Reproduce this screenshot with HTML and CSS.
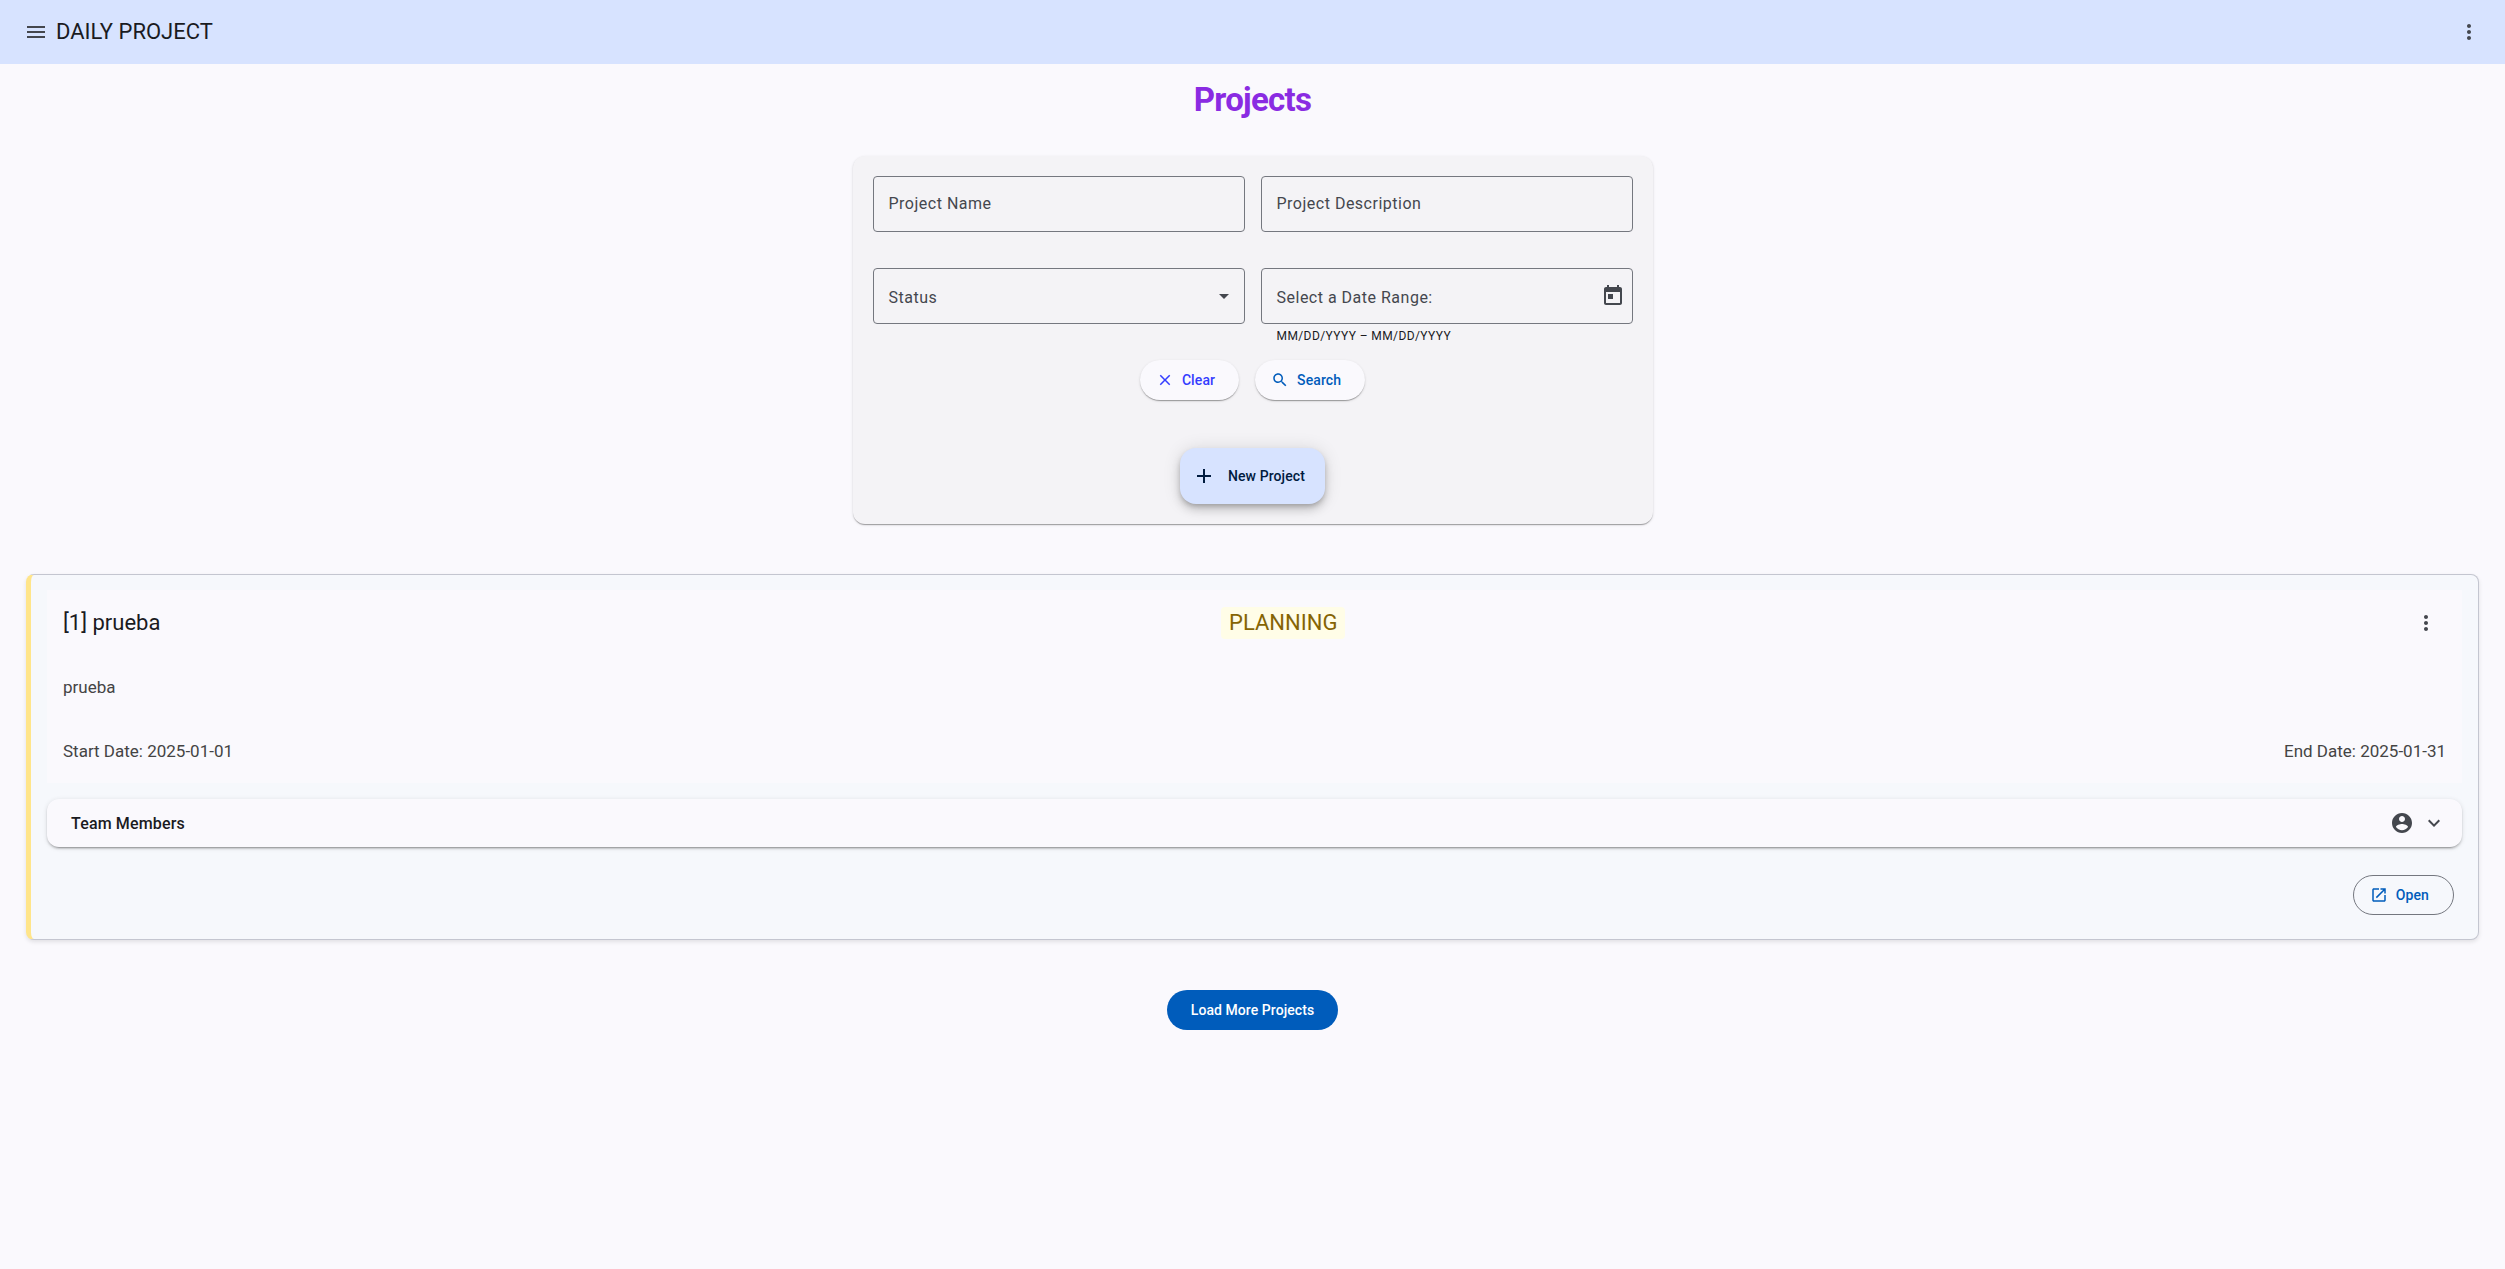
FILE: index.html
```html
<!DOCTYPE html>
<html lang="en">
<head>
<meta charset="utf-8">
<title>Daily Project</title>
<link rel="stylesheet" href="styles.css">
</head>
<body>
<header class="toolbar">
  <svg class="icon" viewBox="0 0 24 24"><path d="M3 18h18v-2H3v2zm0-5h18v-2H3v2zm0-7v2h18V6H3z"/></svg>
  <span class="toolbar-title">DAILY PROJECT</span>
  <svg class="icon" viewBox="0 0 24 24"><path d="M12 8c1.1 0 2-.9 2-2s-.9-2-2-2-2 .9-2 2 .9 2 2 2zm0 2c-1.1 0-2 .9-2 2s.9 2 2 2 2-.9 2-2-.9-2-2-2zm0 6c-1.1 0-2 .9-2 2s.9 2 2 2 2-.9 2-2-.9-2-2-2z"/></svg>
</header>
<main>
  <h1 class="page-title">Projects</h1>
  <form class="filters">
    <div class="fields">
      <div class="field"><span>Project Name</span></div>
      <div class="field"><span>Project Description</span></div>
      <div class="field low"><span>Status</span><svg class="icon arrow" viewBox="0 0 24 24"><path d="M7 10l5 5 5-5z"/></svg></div>
      <div class="field-group">
        <div class="field low date"><span>Select a Date Range:</span><svg class="icon" viewBox="0 0 24 24"><path d="M19 3h-1V1h-2v2H8V1H6v2H5c-1.11 0-1.99.9-1.99 2L3 19c0 1.1.89 2 2 2h14c1.1 0 2-.9 2-2V5c0-1.1-.9-2-2-2zm0 16H5V8h14v11zM7 10h5v5H7z"/></svg></div>
        <div class="hint">MM/DD/YYYY – MM/DD/YYYY</div>
      </div>
    </div>
    <div class="actions">
      <button type="button" class="btn raised clear"><svg class="small-icon" viewBox="0 0 24 24"><path d="M19 6.41L17.59 5 12 10.59 6.41 5 5 6.41 10.59 12 5 17.59 6.41 19 12 13.41 17.59 19 19 17.59 13.41 12z"/></svg>Clear</button>
      <button type="button" class="btn raised"><svg class="small-icon" viewBox="0 0 24 24"><path d="M15.5 14h-.79l-.28-.27C15.41 12.59 16 11.11 16 9.5 16 5.91 13.09 3 9.5 3S3 5.91 3 9.5 5.91 16 9.5 16c1.61 0 3.09-.59 4.23-1.57l.27.28v.79l5 4.99L20.49 19l-4.99-5zm-6 0C7.01 14 5 11.99 5 9.5S7.01 5 9.5 5 14 7.01 14 9.5 11.99 14 9.5 14z"/></svg>Search</button>
    </div>
    <button type="button" class="fab"><svg class="icon" viewBox="0 0 24 24"><path d="M19 13h-6v6h-2v-6H5v-2h6V5h2v6h6v2z"/></svg>New Project</button>
  </form>

  <article class="project">
    <section class="summary">
      <div class="summary-head">
        <span class="name">[1] prueba</span>
        <span class="status">PLANNING</span>
        <span class="menu"><svg class="icon" viewBox="0 0 24 24"><path d="M12 8c1.1 0 2-.9 2-2s-.9-2-2-2-2 .9-2 2 .9 2 2 2zm0 2c-1.1 0-2 .9-2 2s.9 2 2 2 2-.9 2-2-.9-2-2-2zm0 6c-1.1 0-2 .9-2 2s.9 2 2 2 2-.9 2-2-.9-2-2-2z"/></svg></span>
      </div>
      <p class="description">prueba</p>
      <div class="dates"><span>Start Date: 2025-01-01</span><span>End Date: 2025-01-31</span></div>
    </section>
    <section class="panel">
      <span class="panel-title">Team Members</span>
      <svg class="icon" viewBox="0 0 24 24"><path d="M12 2C6.48 2 2 6.48 2 12s4.48 10 10 10 10-4.48 10-10S17.52 2 12 2zm0 3c1.66 0 3 1.34 3 3s-1.34 3-3 3-3-1.34-3-3 1.34-3 3-3zm0 14.2c-2.5 0-4.71-1.28-6-3.22.03-1.99 4-3.08 6-3.08 1.99 0 5.97 1.09 6 3.08-1.29 1.94-3.5 3.22-6 3.22z"/></svg>
      <svg class="icon chevron" viewBox="0 0 24 24"><path d="M7.41 8.59L12 13.17l4.59-4.58L18 10l-6 6-6-6z"/></svg>
    </section>
    <div class="project-actions">
      <button type="button" class="btn outlined"><svg class="small-icon" viewBox="0 0 24 24"><path d="M19 19H5V5h7V3H5c-1.11 0-2 .9-2 2v14c0 1.1.89 2 2 2h14c1.1 0 2-.9 2-2v-7h-2v7zM14 3v2h3.59l-9.83 9.83 1.41 1.41L19 6.41V10h2V3h-7z"/></svg>Open</button>
    </div>
  </article>
  <button type="button" class="btn filled">Load More Projects</button>
</main>
</body>
</html>
```
FILE: styles.css
```css
* { box-sizing: border-box; }
body {
  margin: 0;
  background: #faf9fd;
  color: #1a1b1f;
  font-family: Roboto, sans-serif;
  font-size: 16px;
}
.icon { width: 24px; height: 24px; fill: #44474e; flex: none; display: block; }
.small-icon { width: 18px; height: 18px; fill: currentColor; flex: none; }

.toolbar {
  display: flex;
  align-items: center;
  height: 64px;
  padding: 0 24px;
  background: #d7e3ff;
}
.toolbar-title { flex: 1; margin-left: 8px; font-size: 22px; line-height: 28px; }

main { display: flex; flex-direction: column; align-items: center; padding: 0 26px; }
.page-title {
  margin: 16px 0 36px;
  color: #8a2be2;
  font-size: 33px;
  line-height: 40px;
  font-weight: 700;
  letter-spacing: -.7px;
}

.filters {
  display: flex;
  flex-direction: column;
  align-items: center;
  width: 800px;
  height: 368px;
  padding: 20px;
  border-radius: 12px;
  background: #f4f3f6;
  box-shadow: 0 2px 1px -1px rgba(0,0,0,.2), 0 1px 1px rgba(0,0,0,.14), 0 1px 3px rgba(0,0,0,.12);
}
.fields { display: grid; grid-template-columns: 1fr 1fr; gap: 36px 16px; width: 100%; }
.field {
  display: flex;
  align-items: center;
  justify-content: space-between;
  height: 56px;
  padding: 0 15px;
  border: 1px solid #74777f;
  border-radius: 4px;
  color: #44474e;
  line-height: 24px;
  letter-spacing: .5px;
}
.field.low span { padding-top: 3px; }
.arrow { margin-right: -7px; }
.date { padding-right: 7px; }
.hint { height: 20px; padding: 4px 16px 0; font-size: 12px; line-height: 16px; letter-spacing: .4px; }
.actions { display: flex; gap: 16px; margin-top: 16px; }

.btn {
  display: flex;
  align-items: center;
  justify-content: center;
  gap: 8px;
  height: 40px;
  padding: 0 24px;
  border: 0;
  border-radius: 20px;
  font: 500 14px/20px Roboto, sans-serif;
  letter-spacing: .1px;
  color: #005cbb;
}
.raised {
  padding-left: 16px;
  background: #faf9fd;
  box-shadow: 0 2px 1px -1px rgba(0,0,0,.2), 0 1px 1px rgba(0,0,0,.14), 0 1px 3px rgba(0,0,0,.12);
}
.clear { color: #343dff; }
.fab {
  display: flex;
  align-items: center;
  gap: 12px;
  height: 56px;
  margin-top: 48px;
  padding: 0 20px 0 12px;
  border: 0;
  border-radius: 16px;
  background: #d7e3ff;
  color: #001b3f;
  font: 500 14px/20px Roboto, sans-serif;
  letter-spacing: .1px;
  box-shadow: 0 3px 5px -1px rgba(0,0,0,.2), 0 6px 10px rgba(0,0,0,.14), 0 1px 18px rgba(0,0,0,.12);
}
.fab .icon { fill: currentColor; }

.project {
  width: 100%;
  height: 366px;
  margin: 50px 0;
  padding: 15px 16px;
  border: 1px solid #c4c6d0;
  border-left: 5px solid #ffe58a;
  border-radius: 8px;
  background: #f6f8fc;
  box-shadow: 0 2px 4px rgba(0,0,0,.1);
}
.summary { height: 193px; padding: 16px; background: #faf9fd; }
.summary-head { display: flex; justify-content: space-between; align-items: center; height: 34px; font-size: 22px; line-height: 28px; }
.status { padding: 2px 8px; border-radius: 4px; background: #fffde7; color: #856404; }
.menu { padding: 0 8px; }
.description { margin: 35px 0 0; font-size: 17px; line-height: 24px; color: #444; }
.dates { display: flex; justify-content: space-between; margin-top: 40px; font-size: 17px; line-height: 24px; color: #444; }
.panel {
  display: flex;
  align-items: center;
  height: 48px;
  margin-top: 16px;
  padding: 0 16px 0 24px;
  border-radius: 12px;
  background: #faf9fd;
  box-shadow: 0 3px 1px -2px rgba(0,0,0,.2), 0 2px 2px rgba(0,0,0,.14), 0 1px 5px rgba(0,0,0,.12);
}
.panel-title { flex: 1; font-weight: 500; letter-spacing: .15px; }
.chevron { margin-left: 8px; }
.project-actions { display: flex; justify-content: flex-end; margin-top: 28px; padding-right: 8px; }
.outlined { padding: 0 24px 0 16px; border: 1px solid #74777f; background: transparent; }
.filled { padding: 0 23.5px; background: #005cbb; color: #fff; letter-spacing: .06px; }
```
